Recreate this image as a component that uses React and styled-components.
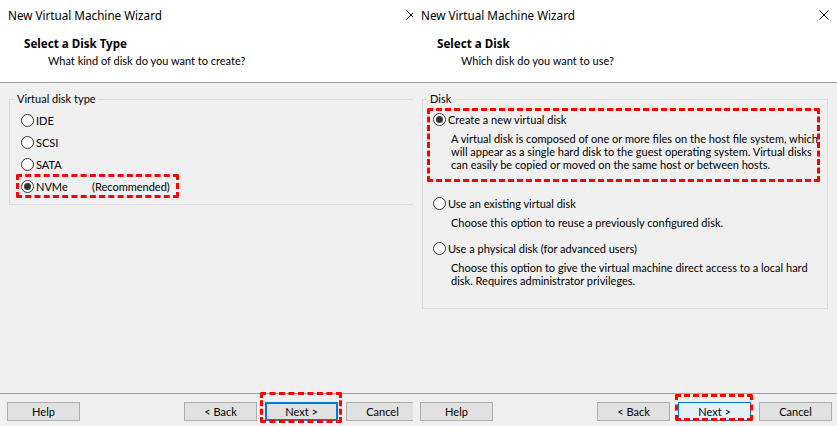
import React from 'react';
import styled, { createGlobalStyle } from 'styled-components';

const GlobalStyle = createGlobalStyle`
  *, *::before, *::after { box-sizing: border-box; }
  html, body { margin: 0; padding: 0; background: #f0f0f0; }
  body {
    font-family: 'Lato', 'Segoe UI', sans-serif;
    font-size: 11px;
    color: #000;
  }
`;

const leftOptions = [
  { name: 'IDE' },
  { name: 'SCSI' },
  { name: 'SATA' },
  { name: 'NVMe', note: '(Recommended)', checked: true, mark: true },
];

const rightOptions = [
  {
    title: 'Create a new virtual disk',
    checked: true,
    mark: true,
    gap: 0,
    lines: [
      'A virtual disk is composed of one or more files on the host file system, which',
      'will appear as a single hard disk to the guest operating system. Virtual disks',
      'can easily be copied or moved on the same host or between hosts.',
    ],
  },
  {
    title: 'Use an existing virtual disk',
    gap: 21,
    lines: ['Choose this option to reuse a previously configured disk.'],
  },
  {
    title: 'Use a physical disk (for advanced users)',
    gap: 8,
    lines: [
      'Choose this option to give the virtual machine direct access to a local hard',
      'disk. Requires administrator privileges.',
    ],
  },
];

const CloseIcon = () => (
  <svg width="10" height="10" viewBox="0 0 10 10">
    <path d="M0.5 0.5 L9.5 9.5 M9.5 0.5 L0.5 9.5" stroke="#000" strokeWidth="1" fill="none" />
  </svg>
);

const Wizard = ({ title, subtitle, legend, children, markNext }) => (
  <Window>
    <TitleBar>
      <span>New Virtual Machine Wizard</span>
      <CloseIcon />
    </TitleBar>
    <Header>
      <HeaderTitle>{title}</HeaderTitle>
      <HeaderSub>{subtitle}</HeaderSub>
    </Header>
    <Body>
      <GroupBox>
        <Legend>{legend}</Legend>
        {children}
      </GroupBox>
    </Body>
    <Footer>
      <Button>Help</Button>
      <Spacer />
      <Button>&lt; Back</Button>
      <Mark {...markNext.box}>
        <Button $variant={markNext.variant}>Next &gt;</Button>
      </Mark>
      <Button>Cancel</Button>
    </Footer>
  </Window>
);

const App = () => (
  <>
    <GlobalStyle />
    <Screen>
      <Clip>
        <Wizard
          title="Select a Disk Type"
          subtitle="What kind of disk do you want to create?"
          legend="Virtual disk type"
          markNext={{ variant: 'focus', box: { $top: -10, $left: -5, $w: 82, $h: 31 } }}
        >
          <TypeList>
            {leftOptions.map((o) => {
              const row = (
                <RadioRow key={o.name}>
                  <Radio $checked={o.checked} />
                  <TypeName $wide={!!o.note}>{o.name}</TypeName>
                  {o.note && <span>{o.note}</span>}
                </RadioRow>
              );
              return o.mark ? (
                <Mark key={o.name} $top={-1} $left={-5} $w={163} $h={24}>
                  {row}
                </Mark>
              ) : (
                row
              );
            })}
          </TypeList>
        </Wizard>
      </Clip>
      <Wizard
        title="Select a Disk"
        subtitle="Which disk do you want to use?"
        legend="Disk"
        markNext={{ variant: 'hover', box: { $top: -8, $left: -3, $w: 78, $h: 27 } }}
      >
        <DiskList>
          {rightOptions.map((o) => {
            const block = (
              <Option key={o.title} $gap={o.gap}>
                <RadioRow>
                  <Radio $checked={o.checked} />
                  <span>{o.title}</span>
                </RadioRow>
                <Desc>
                  {o.lines.map((l) => (
                    <Line key={l}>{l}</Line>
                  ))}
                </Desc>
              </Option>
            );
            return o.mark ? (
              <Mark key={o.title} $top={0} $left={-6} $w={393} $h={74} $block>
                {block}
              </Mark>
            ) : (
              block
            );
          })}
        </DiskList>
      </Wizard>
    </Screen>
  </>
);

// Styled Components

const Screen = styled.div`
  display: flex;
  width: 837px;
  height: 426px;
  overflow: hidden;
`;

const Clip = styled.div`
  flex: none;
  width: 413px;
  overflow: hidden;
`;

const Window = styled.div`
  flex: none;
  width: 424px;
  height: 426px;
  display: flex;
  flex-direction: column;
  background: #f0f0f0;
`;

const TitleBar = styled.div`
  flex: none;
  height: 30px;
  padding: 0 8px;
  background: #fff;
  display: flex;
  align-items: center;
  justify-content: space-between;
  font-family: 'Noto Sans', sans-serif;
  font-size: 11.7px;
`;

const Header = styled.div`
  flex: none;
  height: 53px;
  padding: 6px 0 0 24px;
  background: #fff;
  border-bottom: 1px solid #a0a0a0;
`;

const HeaderTitle = styled.div`
  font-family: 'Noto Sans', sans-serif;
  font-size: 11.6px;
  font-weight: 700;
  line-height: 16px;
`;

const HeaderSub = styled.div`
  line-height: 16px;
  margin: 1px 0 0 24px;
`;

const Body = styled.div`
  flex: 1;
  padding-left: 9px;
`;

const GroupBox = styled.fieldset`
  width: 406px;
  min-width: 0;
  margin: 8px 0 0 0;
  padding: 0;
  border: 1px solid #dcdcdc;
`;

const Legend = styled.legend`
  margin-left: 5px;
  padding: 0 2px;
  line-height: 16px;
`;

const TypeList = styled.div`
  display: flex;
  flex-direction: column;
  padding: 2px 0 7px 11px;
`;

const DiskList = styled.div`
  display: flex;
  flex-direction: column;
  padding: 1px 8px 21px 10px;
`;

const RadioRow = styled.div`
  display: flex;
  align-items: center;
  gap: 2px;
  height: 22px;
  white-space: nowrap;
`;

const Radio = styled.span`
  flex: none;
  width: 13px;
  height: 13px;
  border: 1px solid #333;
  border-radius: 50%;
  background: #fff;
  display: flex;
  align-items: center;
  justify-content: center;

  &::after {
    content: '';
    width: 7px;
    height: 7px;
    border-radius: 50%;
    background: ${(p) => (p.$checked ? '#333' : 'transparent')};
  }
`;

const TypeName = styled.span`
  min-width: ${(p) => (p.$wide ? '54px' : '0')};
`;

const Option = styled.div`
  margin-top: ${(p) => p.$gap}px;
`;

const Desc = styled.div`
  padding-left: 18px;
  margin-top: 2px;
`;

const Line = styled.div`
  line-height: 13px;
  white-space: nowrap;
`;

const Mark = styled.div`
  position: relative;
  display: ${(p) => (p.$block ? 'block' : 'inline-flex')};

  &::after {
    content: '';
    position: absolute;
    top: ${(p) => p.$top}px;
    left: ${(p) => p.$left}px;
    width: ${(p) => p.$w}px;
    height: ${(p) => p.$h}px;
    border: 3px dashed #f00;
    border-radius: 2px;
    pointer-events: none;
  }
`;

const Footer = styled.div`
  flex: none;
  height: 33px;
  display: flex;
  align-items: flex-start;
  gap: 8px;
  padding: 8px 5px 0 7px;
  border-top: 1px solid #a0a0a0;
`;

const Spacer = styled.div`
  flex: 1;
  margin-left: -8px;
`;

const Button = styled.button`
  width: 73px;
  height: 19px;
  padding: 0;
  font: inherit;
  font-size: 11px;
  line-height: 15px;
  color: #000;
  background: ${(p) => (p.$variant === 'hover' ? '#e5f1fb' : '#e1e1e1')};
  border: ${(p) =>
    p.$variant === 'focus'
      ? '2px solid #0078d7'
      : p.$variant === 'hover'
      ? '1px solid #0078d7'
      : '1px solid #adadad'};
`;

export default App;
